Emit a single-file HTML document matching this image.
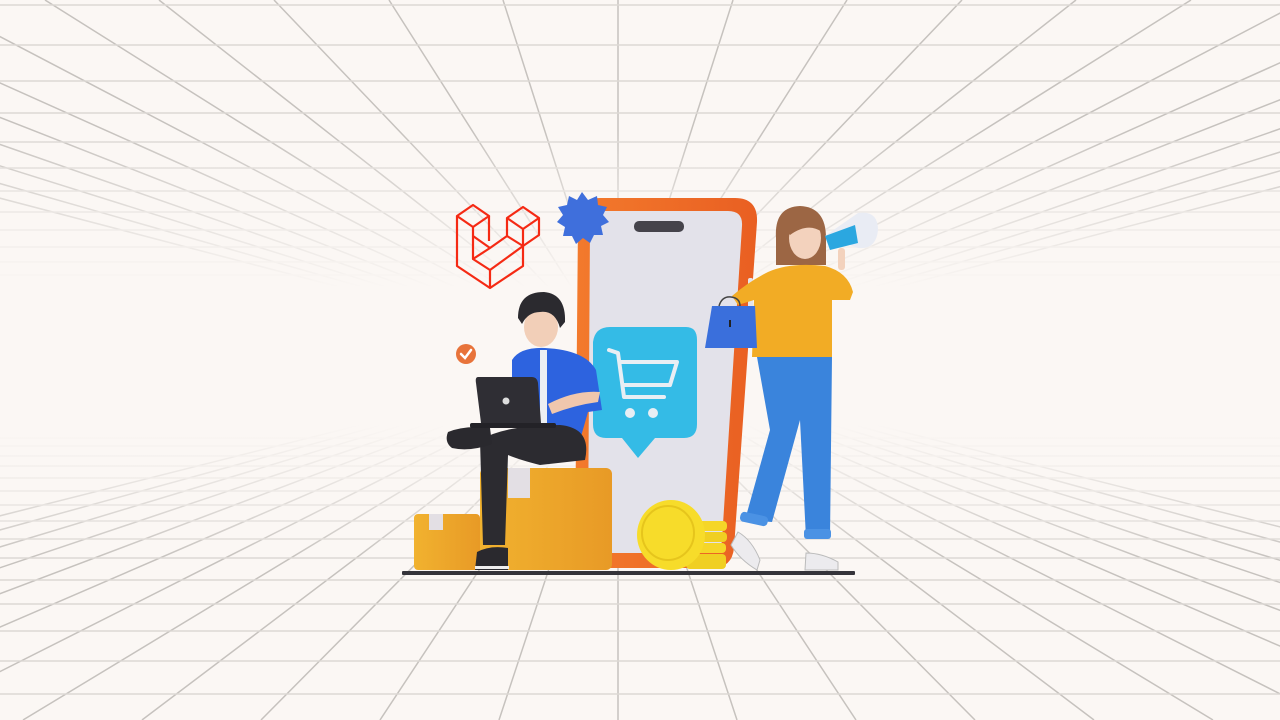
<!DOCTYPE html>
<html><head><meta charset="utf-8"><style>
html,body{margin:0;padding:0;width:1280px;height:720px;overflow:hidden;background:#fbf7f4}
svg{display:block}
</style></head><body>
<svg width="1280" height="720" viewBox="0 0 1280 720" xmlns="http://www.w3.org/2000/svg">
<defs>
<linearGradient id="fade" x1="0" y1="0" x2="0" y2="1">
<stop offset="0.18" stop-color="#fbf7f4" stop-opacity="0"/>
<stop offset="0.33" stop-color="#fbf7f4" stop-opacity="0.7"/>
<stop offset="0.40" stop-color="#fbf7f4" stop-opacity="1"/>
<stop offset="0.59" stop-color="#fbf7f4" stop-opacity="1"/>
<stop offset="0.66" stop-color="#fbf7f4" stop-opacity="0.7"/>
<stop offset="0.78" stop-color="#fbf7f4" stop-opacity="0"/>
</linearGradient>
<linearGradient id="box" x1="0" y1="0" x2="1" y2="0"><stop offset="0" stop-color="#f1b22f"/><stop offset="1" stop-color="#e89a26"/></linearGradient>
<linearGradient id="ph" x1="0" y1="0" x2="1" y2="0"><stop offset="0" stop-color="#f37a2c"/><stop offset="1" stop-color="#e95f22"/></linearGradient>
</defs>
<g stroke="#c6c2be" stroke-width="1.5" fill="none">
<path d="M-757 0L618 360M-643 0L618 360M-528 0L618 360M-414 0L618 360M-299 0L618 360M-185 0L618 360M-70 0L618 360M45 0L618 360M159 0L618 360M274 0L618 360M389 0L618 360M503 0L618 360M618 0L618 360M733 0L618 360M847 0L618 360M962 0L618 360M1076 0L618 360M1191 0L618 360M1305 0L618 360M1420 0L618 360M1534 0L618 360M1649 0L618 360M1764 0L618 360M1878 0L618 360M1993 0L618 360"/>
<path d="M-810 720L618 360M-691 720L618 360M-572 720L618 360M-453 720L618 360M-334 720L618 360M-215 720L618 360M-96 720L618 360M23 720L618 360M142 720L618 360M261 720L618 360M380 720L618 360M499 720L618 360M618 720L618 360M737 720L618 360M856 720L618 360M975 720L618 360M1094 720L618 360M1213 720L618 360M1332 720L618 360M1451 720L618 360M1570 720L618 360M1689 720L618 360M1808 720L618 360M1927 720L618 360M2046 720L618 360"/>
</g>
<g stroke="#dcd8d4" stroke-width="1.6">
<path d="M0 5H1280M0 45H1280M0 81H1280M0 113H1280M0 142H1280M0 168H1280M0 191H1280M0 212H1280M0 230H1280M0 247H1280M0 262H1280M0 275H1280M0 287H1280M0 297H1280M0 306H1280"/>
<path d="M0 694H1280M0 661H1280M0 631H1280M0 604H1280M0 580H1280M0 558H1280M0 539H1280M0 521H1280M0 505H1280M0 491H1280M0 478H1280M0 466H1280M0 456H1280M0 446H1280M0 438H1280"/>
</g>
<rect x="0" y="0" width="1280" height="720" fill="url(#fade)"/>

<!-- phone -->
<path d="M600 198 H735 Q758 198 757 222 L734 548 Q732 568 712 568 H596 Q574 568 575 548 L578 222 Q580 198 600 198Z" fill="url(#ph)"/>
<path d="M603 211 H728 Q743 211 742 226 L722 540 Q721 553 708 553 H598 Q587 553 588 540 L590 226 Q591 211 603 211Z" fill="#e3e2ea"/>
<rect x="634" y="221" width="50" height="11" rx="5" fill="#45434b"/>
<rect x="748" y="278" width="5" height="30" rx="2" fill="#e6e4ea"/>

<!-- cart bubble -->
<path d="M610 327 H686 Q697 327 697 340 V424 Q697 438 684 438 H655 L638 458 L622 438 H606 Q593 438 593 424 V342 Q595 327 610 327Z" fill="#34bbe6"/>
<g stroke="#e8eef4" stroke-width="4" fill="none" stroke-linecap="round" stroke-linejoin="round">
<path d="M609 350 L618 353 L624 397 H664"/><path d="M620 362 H677 L670 385 H624"/>
</g>
<circle cx="630" cy="413" r="5" fill="#e8eef4"/><circle cx="653" cy="413" r="5" fill="#e8eef4"/>

<!-- badge -->
<polygon fill="#3f6fdc" points="582,192 588,200 597,196 598,205 607,207 603,215 609,222 601,226 603,235 594,235 590,243 583,238 576,244 572,236 563,236 565,227 557,222 563,215 558,207 567,205 569,196 577,200"/>

<!-- laravel logo -->
<g stroke="#f52a14" stroke-width="2.2" fill="none" stroke-linejoin="round">
<path d="M457 216 L473 205 L489 216 L473 227 Z M457 216 V266 L490 288 L523 266 V246 L539 235 V218 L523 207 L507 218 V236 L490 248 L473 236 V227"/>
<path d="M489 216 V241 M507 218 L523 229 L539 218 M523 229 V246 M507 236 L523 246 M473 259 L490 270 V288 M490 270 L523 246 M473 236 V259 L490 248"/>
</g>

<!-- check -->
<circle cx="466" cy="354" r="10" fill="#e8733a"/>
<path d="M461 354 L465 358 L471 350" stroke="#fff" stroke-width="2.5" fill="none" stroke-linecap="round"/>

<!-- boxes -->
<rect x="414" y="514" width="66" height="56" rx="4" fill="url(#box)"/>
<rect x="429" y="514" width="14" height="16" fill="#e3dfe4"/>
<rect x="480" y="468" width="132" height="102" rx="6" fill="url(#box)"/>
<rect x="508" y="468" width="22" height="30" fill="#e3dfe4"/>

<!-- man -->
<path d="M512 360 Q520 347 545 348 Q585 350 596 370 L602 410 L588 412 L580 440 L522 442 Q514 420 512 400 Z" fill="#2d63df"/>
<rect x="540" y="350" width="7" height="92" fill="#eceff3"/>
<path d="M548 404 Q575 390 600 392 L598 402 Q575 405 552 414Z" fill="#f0c7ad"/>
<path d="M480 440 Q505 425 560 425 Q592 428 585 460 L540 465 Q520 460 508 455 L505 545 H483 Z" fill="#2c2b30"/>
<path d="M448 432 Q465 425 490 428 L492 444 Q470 452 452 448 Q444 442 448 432Z" fill="#2a292e"/>
<path d="M477 552 Q490 545 508 548 V570 H475Z" fill="#2a292e"/>
<rect x="475" y="566" width="34" height="3" fill="#eee"/>
<path d="M478 377 H532 Q537 377 538 383 L541 423 H481 L476 383 Q475 377 478 377Z" fill="#2f2e34"/>
<rect x="470" y="423" width="86" height="5" rx="2" fill="#232227"/>
<circle cx="506" cy="401" r="3.5" fill="#ddd"/>
<ellipse cx="541" cy="327" rx="17" ry="20" fill="#f2cfb8"/>
<path d="M518 318 Q518 292 544 292 Q566 294 565 322 L560 328 Q555 310 540 312 Q528 312 522 324Z" fill="#2b2a2f"/>

<!-- coins -->
<rect x="690" y="521" width="37" height="10" rx="4" fill="#f5d628"/>
<rect x="690" y="532" width="37" height="10" rx="4" fill="#f0cf22"/>
<rect x="688" y="543" width="38" height="10" rx="4" fill="#f5d628"/>
<rect x="686" y="554" width="40" height="15" rx="4" fill="#f0cf22"/>
<ellipse cx="671" cy="535" rx="34" ry="35" fill="#f7dc2a"/>
<ellipse cx="668" cy="533" rx="26" ry="27" fill="none" stroke="#e6c51c" stroke-width="2"/>

<!-- woman -->
<path d="M776 238 Q774 207 800 206 Q826 207 826 238 V265 H776Z" fill="#9c6644"/>
<ellipse cx="805" cy="238" rx="16" ry="21" fill="#f3d2bd"/>
<path d="M784 228 Q790 212 808 214 Q824 218 822 232 Q808 222 790 235Z" fill="#9c6644"/>
<path d="M768 272 Q790 262 825 266 Q848 272 853 292 L850 300 L832 300 L832 357 H752 L754 300 L738 305 L732 296 Q748 282 768 272Z" fill="#f2ac25"/>
<path d="M757 357 H832 L830 538 H806 L800 420 L772 522 L745 520 L770 430 Z" fill="#3a84dc"/>
<rect x="740" y="514" width="28" height="10" rx="4" fill="#4b92e4" transform="rotate(12 754 519)"/>
<rect x="804" y="529" width="27" height="10" rx="3" fill="#4b92e4"/>
<path d="M738 532 Q752 540 760 560 L757 570 Q740 560 731 545Z" fill="#ecebee" stroke="#bbb" stroke-width="1"/>
<path d="M806 553 Q822 553 838 562 L838 570 H805Z" fill="#ecebee" stroke="#bbb" stroke-width="1"/>
<path d="M712 306 H755 L757 348 H705Z" fill="#3a6fdc"/>
<path d="M719 306 Q722 296 731 297 Q740 298 740 306" stroke="#444" stroke-width="1.5" fill="none"/>
<rect x="729" y="320" width="2" height="7" fill="#222"/>
<path d="M825 236 L858 213 Q878 210 878 230 Q876 250 858 248 Z" fill="#e9ecf4"/>
<path d="M825 236 L855 225 L858 243 L830 250Z" fill="#2ba7e0"/>
<rect x="838" y="248" width="7" height="22" rx="3" fill="#f3d2bd"/>

<!-- floor bar -->
<rect x="402" y="571" width="453" height="4" rx="1" fill="#35343a"/>
</svg>
</body></html>
